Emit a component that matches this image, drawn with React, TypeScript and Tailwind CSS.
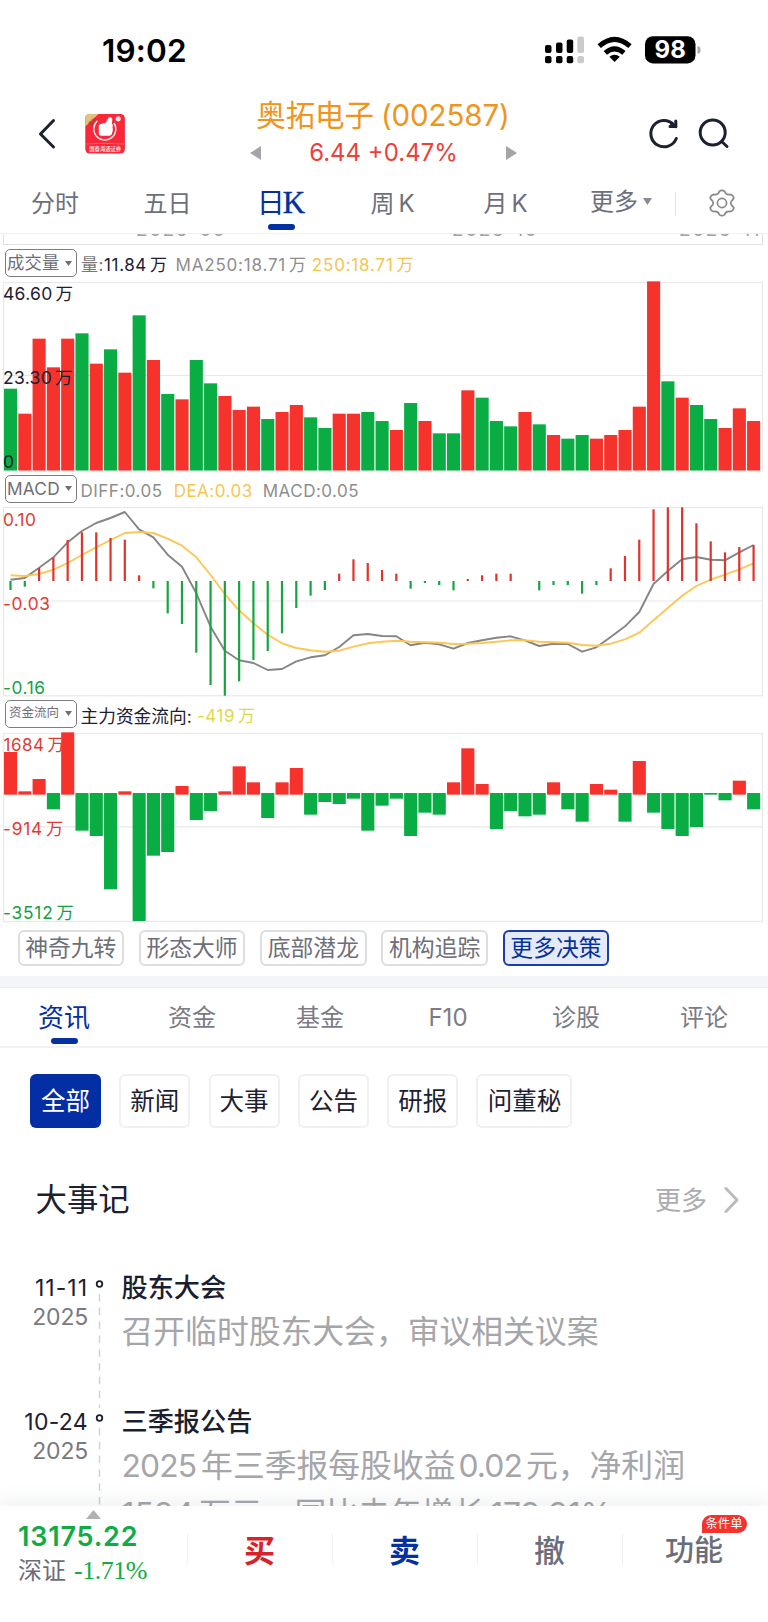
import React from 'react';

const PITCH = 14.29;
const RED = '#f6322c';
const GREEN = '#0aad43';

const volumeTops = [
  491, 566, 341, 427, 341, 325, 416, 373, 443, 271, 405, 507, 523, 405, 475, 513, 555, 545, 582, 561, 540, 577, 609, 566, 566, 561, 588,
  615, 534, 588, 625, 625, 496, 518, 588, 604, 561, 598, 630, 641, 630, 641, 630, 615, 545, 169, 469, 518, 540, 582, 609, 550, 588,
];
const volumeColors = 'GRRRRGRGRGRGRGGRRRGRRGGRRGGRGRGGRGGGRGRGGRRRRRGRGGRRR';

const macdEnds = [
  360, 350, 294, 263, 210, 187, 187, 204, 209, 316, 355, 430, 462, 548, 645, 677, 634, 570, 543, 490, 414, 377, 360, 311, 268, 279, 300,
  311, 356, 339, 345, 361, 327, 316, 311, 311, 333, 361, 345, 345, 371, 345, 295, 258, 209, 118, 112, 112, 160, 214, 247, 231, 225,
];
const diffLine = [
  329, 324, 293, 262, 217, 183, 159, 144, 126, 178, 202, 254, 290, 370, 470, 542, 571, 579, 600, 597, 574, 562, 556, 531, 496, 492, 498,
  499, 526, 518, 523, 536, 519, 511, 503, 499, 511, 528, 521, 522, 545, 532, 501, 469, 426, 342, 303, 268, 261, 269, 271, 247, 225,
];
const deaLine = [
  316, 318, 312, 299, 279, 255, 232, 210, 189, 186, 189, 206, 227, 262, 315, 372, 421, 460, 494, 520, 534, 541, 545, 542, 530, 520, 515,
  512, 515, 517, 518, 522, 521, 519, 515, 511, 511, 515, 517, 518, 525, 527, 521, 508, 488, 451, 414, 377, 348, 329, 314, 298, 280,
];
const fundEnds = [
  171, 289, 252, 343, 112, 407, 423, 583, 289, 678, 482, 471, 273, 375, 348, 289, 214, 262, 369, 262, 219, 359, 321, 327, 311, 407, 332,
  311, 423, 353, 359, 262, 160, 267, 402, 348, 364, 359, 262, 343, 380, 267, 284, 380, 198, 353, 402, 423, 396, 299, 316, 257, 343,
];

function Frame({ h, mid }: { h: number; mid: number }) {
  return (
    <g fill="none" stroke="#e8e8ea" strokeWidth="1.2">
      <rect x="3.5" y="2.5" width="759" height={h} />
      <path d={`M3.5 ${mid}H762.5`} />
    </g>
  );
}

/* plots: data values are in thirds of a pixel */
function VolumeChart() {
  return (
    <svg className="block" width="768" height="193" viewBox="0 0 768 193">
      <Frame h={188.5} mid={95.5} />
      {volumeTops.map((t, i) => {
        const y = (t - 165) / 3;
        return <rect key={i} x={4 + PITCH * i} y={y} width="13.1" height={190.5 - y} fill={volumeColors[i] === 'R' ? RED : GREEN} />;
      })}
    </svg>
  );
}

const points = (a: number[]) => a.map((v, i) => `${(10.5 + PITCH * i).toFixed(1)},${((v - 105) / 3).toFixed(1)}`).join(' ');

function MacdChart() {
  return (
    <svg className="block" width="768" height="193" viewBox="0 0 768 193">
      <Frame h={188.3} mid={96} />
      <polyline points={points(diffLine)} fill="none" stroke="#858585" strokeWidth="1.9" strokeLinejoin="round" />
      <polyline points={points(deaLine)} fill="none" stroke="#fcc755" strokeWidth="1.9" strokeLinejoin="round" />
      {macdEnds.map((v, i) =>
        v === 333 ? null : (
          <rect
            key={i}
            x={9.4 + PITCH * i}
            y={(Math.min(v, 333) - 105) / 3}
            width="2.2"
            height={Math.abs(v - 333) / 3}
            fill={v < 333 ? '#e0332c' : '#16a541'}
          />
        ),
      )}
    </svg>
  );
}

function FundChart() {
  return (
    <svg className="block" width="768" height="193" viewBox="0 0 768 193">
      <Frame h={188} mid={95.8} />
      <text x="3.5" y="20.2" fontSize="17" letterSpacing="0.5" fill="#e33a34">
        1684<tspan dx="3">万</tspan>
      </text>
      {fundEnds.map((v, i) => {
        const up = v < 294;
        const top = up ? v : 294;
        const end = up ? 299 : v;
        return <rect key={i} x={4 + PITCH * i} y={(top - 108) / 3} width="13.1" height={(end - top) / 3} fill={up ? RED : GREEN} />;
      })}
    </svg>
  );
}

function Selector({ label, small }: { label: string; small?: boolean }) {
  return (
    <div className="ml-[5px] flex h-[28px] w-[72px] shrink-0 items-center justify-between rounded-[5px] border-[1.5px] border-[#7d7d86] pr-[4px] pl-px text-[#6e6e78]">
      <span className={small ? 'pl-[2px] text-[12.5px] leading-none tracking-normal' : 'text-[17.3px] leading-none tracking-[0.2px]'}>{label}</span>
      <svg width="7" height="5" viewBox="0 0 7 5">
        <path d="M0 0H7L3.5 5Z" fill="#6e6e78" />
      </svg>
    </div>
  );
}

function Wan() {
  return <span className="ml-[3px]">万</span>;
}

function Timeline({ date, title, children }: { date: React.ReactNode; title: string; children: React.ReactNode }) {
  return (
    <div className="flex h-[134px] text-[23px]">
      <div className="w-[88px] text-right leading-[29px]">
        <div>{date}</div>
        <div className="tracking-[-0.2px] text-[#777983]">2025</div>
      </div>
      <svg className="block shrink-0" width="24" height="134" viewBox="0 0 24 134">
        <path d="M11.5 20V134" stroke="#d2d2d5" strokeWidth="1.5" strokeDasharray="7.5 6.3" />
        <circle cx="11.5" cy="10" r="2.8" fill="#fff" stroke="#1c2030" strokeWidth="1.8" />
      </svg>
      <div className="pl-[9.5px]">
        <div className="text-[26.2px] leading-[28px] font-medium text-[#1a1e2e]">{title}</div>
        <div className="mt-[6px] text-[31.8px] leading-[48px] whitespace-nowrap text-[#a5a5aa]">{children}</div>
      </div>
    </div>
  );
}

const decisions = ['神奇九转', '形态大师', '底部潜龙', '机构追踪'];
const sections = ['资金', '基金', 'F10', '诊股', '评论'];
const chips = ['新闻', '大事', '公告', '研报'];

export default function App() {
  return (
    <div className="flex h-[1622px] w-[768px] flex-col overflow-hidden bg-white font-[Inter,'Noto_Sans_CJK_SC',sans-serif] text-[#1c2030]">
      <div className="flex h-[98px] shrink-0 items-start justify-between pt-[31px] pr-[67px] pl-[102px]">
        <span className="text-[31.5px] leading-[40px] font-semibold tracking-[0.2px] text-black">19:02</span>
        <div className="flex pt-[5px]">
          <svg className="block" width="156" height="29" viewBox="0 0 156 29">
            <g>
              <rect x="0" y="9" width="6.5" height="8" rx="2" />
              <rect x="11" y="6.5" width="6.5" height="10.5" rx="2" />
              <rect x="21.7" y="3.5" width="6.5" height="13.5" rx="2" />
              <rect x="0" y="20" width="6.5" height="7.3" rx="2" />
              <rect x="11" y="20" width="6.5" height="7.3" rx="2" />
              <rect x="21.7" y="20" width="6.5" height="7.3" rx="2" />
              <rect x="32.3" y="0.5" width="6.7" height="16.5" rx="2" fill="#cbcbcb" />
              <rect x="32.3" y="20" width="6.7" height="7.3" rx="2" fill="#cbcbcb" />
            </g>
            <g fill="none" stroke="#000" strokeWidth="5">
              <path d="M54.2 10.2Q69.6 -3.4 85 10.2" />
              <path d="M60.3 16.9Q69.6 8.9 78.9 16.9" />
            </g>
            <path d="M64.4 20.8Q69.6 16.6 74.8 20.8L69.6 26Z" />
            <rect x="100" y="0.2" width="50.5" height="27.2" rx="8" />
            <path d="M152.5 10Q155.6 10.5 155.6 13.9Q155.6 17.3 152.5 17.8Z" fill="#aaa" />
            <text x="125.2" y="22.2" fontSize="24" fontWeight="700" fill="#fff" textAnchor="middle">98</text>
          </svg>
        </div>
      </div>

      <div className="flex h-[72px] shrink-0">
        <svg className="block" width="250" height="72" viewBox="0 0 250 72">
          <path d="M53.5 22.5L40.5 36L53.5 49" fill="none" stroke="#1c2030" strokeWidth="3" strokeLinecap="round" strokeLinejoin="round" />
          <rect x="85.3" y="16" width="39.6" height="39.6" rx="4.5" fill="#f8283a" />
          <path d="M85.3 28.5V20.5Q85.3 16 89.8 16H98.5Z" fill="#e6c07c" />
          <path d="M97.5 22.8A11 11 0 1 0 114 25" fill="none" stroke="#ffeceb" strokeWidth="1.4" />
          <path d="M98.8 27.5Q99.5 25.5 105.5 25L108.6 19.6Q112.5 18.6 112.3 22L111.8 25Q113.6 27 112.6 29.5Q113.6 32.5 112.1 35Q111.8 37.7 109 37.7H101.5Q98.8 37.5 98.8 35Z" fill="#fff" />
          <circle cx="118.2" cy="20.8" r="2.6" fill="#fff" opacity="0.85" />
          <path d="M86 46Q105 44.5 124 46" stroke="#ff8d89" strokeWidth="0.6" fill="none" />
          <text x="105.2" y="52.8" fontSize="5.3" fontWeight="500" fill="#ffe9e6" textAnchor="middle">国泰海通证券</text>
          <text x="91.6" y="25.2" fontSize="4.6" fill="#7c5320" textAnchor="middle" transform="rotate(-45 91.6 23)">君弘</text>
        </svg>
        <div className="flex w-[268px] flex-col items-center pt-px">
          <div className="-ml-[2px] text-[29.5px] leading-[33px] tracking-[-0.1px] whitespace-nowrap text-[#f0951b]">奥拓电子<span className="ml-[7px]">(002587)</span></div>
          <div className="mt-[2px] flex h-[38px] w-full items-center justify-between pr-px">
            <svg width="11" height="14" viewBox="0 0 11 14"><path d="M11 0V14L0 7Z" fill="#a4a4ab" /></svg>
            <span className="pt-px text-[24px] text-[#ee3f39]">6.44 +0.47%</span>
            <svg width="11" height="14" viewBox="0 0 11 14"><path d="M0 0V14L11 7Z" fill="#a4a4ab" /></svg>
          </div>
        </div>
        <svg className="block" width="250" height="72" viewBox="518 98 250 72" fill="none" stroke="#1c2030" strokeWidth="3" strokeLinecap="round" strokeLinejoin="round">
          <path d="M676.3 138.5A13.2 13.2 0 1 1 673.6 124.5" />
          <path d="M675.8 121V126.6H670" />
          <path d="M671.5 124L675.8 126.6" />
          <circle cx="712.7" cy="132.5" r="12.5" />
          <path d="M721.7 141.5L727 146.5" />
        </svg>
      </div>

      <div className="flex h-[64px] shrink-0 border-b border-[#f0f0f2] text-[24px] leading-[68px] text-[#6d6f7b]">
        <div className="w-[110px] text-center">分时</div>
        <div className="w-[115px] text-center">五日</div>
        <div className="flex w-[112px] flex-col items-center text-[#0430a0]">
          <div className="h-[54px] text-[28px] leading-[67px] whitespace-nowrap">
            日<span className="-ml-[2px] font-['Liberation_Serif',serif] text-[31px] leading-[0] [-webkit-text-stroke:0.4px_#0430a0]">K</span>
          </div>
          <div className="h-[5.5px] w-[27px] shrink-0 rounded-[3px] bg-[#0430a0]" />
        </div>
        <div className="w-[111px] text-center">周<span className="ml-[4px]">K</span></div>
        <div className="w-[115px] text-center">月<span className="ml-[4px]">K</span></div>
        <div className="ml-[27px] flex w-[85px] items-center">
          <span>更多</span>
          <svg className="ml-[4.5px]" width="9" height="7" viewBox="0 0 9 7"><path d="M0 0H9L4.5 7Z" fill="#8a8a92" /></svg>
        </div>
        <div className="mt-[22px] h-[24px] w-px bg-[#e5e5e8]" />
        <svg className="mt-[19px] ml-[32px]" width="28" height="28" viewBox="0 0 28 28" fill="none" stroke="#8a8a8d" strokeWidth="1.7" strokeLinejoin="round">
          <path d="M11.3 2.4Q14 .3 16.7 2.4Q18 6.3 22.2 5.4Q25.6 6.2 25.8 9.3Q24.9 10.7 23.4 12.2Q22.2 14 23.4 15.8Q24.9 17.3 25.8 18.7Q25.6 21.8 22.2 22.6Q18 21.7 16.7 25.6Q14 27.7 11.3 25.6Q10 21.7 5.8 22.6Q2.4 21.8 2.2 18.7Q3.1 17.3 4.6 15.8Q5.8 14 4.6 12.2Q3.1 10.7 2.2 9.3Q2.4 6.2 5.8 5.4Q10 6.3 11.3 2.4Z" />
          <circle cx="14" cy="14" r="4.6" />
        </svg>
      </div>

      <div className="flex h-[1272px] shrink-0 flex-col overflow-hidden">
        <div className="mx-[3px] flex h-[11px] w-[760px] shrink-0 items-end overflow-hidden border-x border-b border-[#e2e2e4] text-[19px] leading-[28px] tracking-[1.6px] text-[#a0a0a6]">
          <div className="flex w-full shrink-0 pl-[132px]">
            <span className="w-[316px]">2025-09</span>
            <span className="w-[227px]">2025-10</span>
            <span>2025-11</span>
          </div>
        </div>

        <div className="flex h-[35px] shrink-0 items-center pt-px text-[17px] tracking-[0.6px]">
          <Selector label="成交量" />
          <div className="ml-[4px] pt-[5px] whitespace-nowrap"><span className="text-[#777]">量:</span>11.84<Wan /></div>
          <div className="ml-[8px] pt-[5px] tracking-[0.8px] whitespace-nowrap text-[#8e8e8e]">MA250:18.71<Wan /></div>
          <div className="ml-[5px] pt-[5px] tracking-[0.8px] whitespace-nowrap text-[#f5c451]">250:18.71<Wan /></div>
        </div>
        <div className="relative h-[191px] shrink-0 text-[17.5px] leading-[20px] tracking-[0.3px]">
          <VolumeChart />
          <span className="absolute top-[4px] left-[3px]">46.60<Wan /></span>
          <span className="absolute top-[88px] left-[3px]">23.30<Wan /></span>
          <span className="absolute top-[172px] left-[3px]">0</span>
        </div>

        <div className="flex h-[34px] shrink-0 items-center pt-px text-[17px] tracking-[0.5px]">
          <Selector label="MACD" />
          <div className="ml-[3.5px] pt-[6px] text-[#8e8e8e]">DIFF:0.05</div>
          <div className="ml-[11px] pt-[6px] text-[#f8c650]">DEA:0.03</div>
          <div className="ml-[10px] pt-[6px] text-[#8e8e8e]">MACD:0.05</div>
        </div>
        <div className="relative h-[191px] shrink-0 text-[17.3px] leading-[20px] tracking-[0.3px]">
          <MacdChart />
          <span className="absolute top-[5px] left-[3px] text-[#e33a34]">0.10</span>
          <span className="absolute top-[89px] left-[3px] tracking-[0.6px] text-[#e33a34]">-0.03</span>
          <span className="absolute top-[173px] left-[3px] tracking-[0.6px] text-[#17a043]">-0.16</span>
        </div>

        <div className="flex h-[35px] shrink-0 items-center text-[17.7px]">
          <Selector label="资金流向" small />
          <div className="ml-[3.5px] pt-[7px]">主力资金流向:</div>
          <div className="ml-[5px] pt-[7px] text-[17px] tracking-[0.6px] text-[#dfd849]">-419<Wan /></div>
        </div>
        <div className="relative h-[193px] shrink-0 text-[17.3px] leading-[20px] tracking-[0.8px]">
          <FundChart />
          <span className="absolute top-[88px] left-[3px] text-[#e33a34]">-914<Wan /></span>
          <span className="absolute top-[172px] left-[3px] text-[#17a043]">-3512<Wan /></span>
        </div>

        <div className="flex h-[52px] shrink-0 gap-[14.8px] pt-[6px] pl-[17.5px] text-[22.8px] text-[#6d6e78]">
          {decisions.map((d) => (
            <div key={d} className="flex h-[36px] w-[106.5px] items-center justify-center rounded-[6px] border-2 border-[#dedee0] pt-px whitespace-nowrap">{d}</div>
          ))}
          <div className="flex h-[36px] w-[106.5px] items-center justify-center rounded-[6px] border-2 border-[#1a3ea6] bg-[#e5eaf8] pt-px whitespace-nowrap text-[#0430a0]">更多决策</div>
        </div>

        <div className="h-[12px] shrink-0 border-b border-[#ececee] bg-[#f3f5f9]" />

        <div className="grid h-[60px] shrink-0 grid-cols-6 border-b-2 border-[#f1f1f3] text-center text-[24px] leading-[59px] text-[#7b7c85]">
          <div className="flex flex-col items-center text-[26px] text-[#0430a0]">
            <div className="h-[50px] leading-[59px]">资讯</div>
            <div className="h-[5.5px] w-[27px] rounded-[3px] bg-[#0430a0]" />
          </div>
          {sections.map((s) => (
            <div key={s}>{s}</div>
          ))}
        </div>

        <div className="flex h-[109px] shrink-0 gap-[18.3px] pt-[26px] pl-[30px] text-[24.5px]">
          <div className="flex h-[54px] w-[71px] items-center justify-center rounded-[6px] bg-[#032ea4] text-white">全部</div>
          {chips.map((c) => (
            <div key={c} className="flex h-[54px] w-[71px] items-center justify-center rounded-[6px] border-2 border-[#f0f0f2]">{c}</div>
          ))}
          <div className="flex h-[54px] w-[96px] items-center justify-center rounded-[6px] border-2 border-[#f0f0f2]">问董秘</div>
        </div>

        <div className="flex h-[86px] shrink-0 items-center justify-between pr-[29px] pl-[35.5px]">
          <span className="pt-px text-[31.4px]">大事记</span>
          <div className="flex items-center text-[#ababb0]">
            <span className="text-[26px]">更多</span>
            <svg className="ml-[17px]" width="15" height="26" viewBox="0 0 15 26"><path d="M2 1.5L13 13L2 24.5" fill="none" stroke="#bcbcc0" strokeWidth="3" strokeLinecap="round" strokeLinejoin="round" /></svg>
          </div>
        </div>

        <div className="shrink-0 pt-[31px]">
          <Timeline date={<span className="tracking-[1px]">11-11</span>} title="股东大会">召开临时股东大会，审议相关议案</Timeline>
          <Timeline date={<span className="tracking-[0.3px]">10-24</span>} title="三季报公告">
            <div><span className="tracking-[-0.9px]">2025</span><span className="ml-[5px]">年三季报每股收益</span><span className="mr-[4px] ml-[3px] tracking-[-0.9px]">0.02</span>元，净利润</div>
            <div>1584<span className="ml-[5px]">万元，同比去年增长</span><span className="ml-[5px] tracking-[-0.1px]">179.91%</span></div>
          </Timeline>
        </div>
      </div>

      <div className="relative flex h-[116px] shrink-0 bg-white shadow-[0_-4px_18px_rgba(90,100,130,0.10)]">
        <svg className="absolute top-[4px] left-[86px]" width="15" height="9" viewBox="0 0 15 9"><path d="M7.5 0L15 9H0Z" fill="#b1b1b4" /></svg>
        <div className="w-[187px] pt-[15px] pl-[18px]">
          <div className="text-[27px] leading-[31px] font-semibold tracking-[0.8px] text-[#0fac45]">13175.22</div>
          <div className="flex items-center pt-px leading-[36px] whitespace-nowrap">
            <span className="text-[24px] text-[#6d6e78]">深证</span>
            <span className="ml-[8px] font-['Liberation_Serif',serif] text-[26px] leading-[34px] tracking-[-0.5px] text-[#0fac45]">-1.71%</span>
          </div>
        </div>
        <div className="mt-[28px] flex h-[30px] flex-1 items-center text-[31px] leading-[34px] font-bold">
          <div className="flex h-full w-[145px] items-center justify-center border-l border-[#efeff1] pt-[3px] pr-px text-[#d8222b]">买</div>
          <div className="flex h-full w-[145px] items-center justify-center border-l border-[#efeff1] pt-[3px] pr-px text-[#0430a0]">卖</div>
          <div className="flex h-full w-[145px] items-center justify-center border-l border-[#efeff1] pt-[3px] pr-px font-medium text-[#6b6d7a]">撤</div>
          <div className="relative flex h-full w-[146px] items-center justify-center border-l border-[#efeff1] pt-[3px] text-[29px] font-medium text-[#6b6d7a]">
            <span className="pr-[3px]">功能</span>
            <span className="absolute -top-[19px] left-[78.5px] flex h-[18px] w-[45px] items-center justify-center rounded-[9px] rounded-bl-none bg-[#f6322c] text-[12.3px] leading-[18px] font-normal whitespace-nowrap text-white">条件单</span>
          </div>
        </div>
      </div>
    </div>
  );
}
